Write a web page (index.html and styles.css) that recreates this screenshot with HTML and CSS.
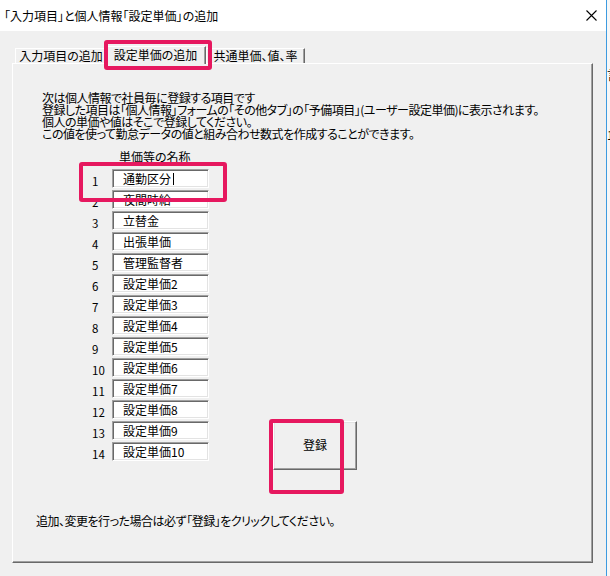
FILE: index.html
```html
<!DOCTYPE html>
<html lang="ja">
<head>
<meta charset="utf-8">
<title>設定単価の追加</title>
<link rel="stylesheet" href="styles.css">
</head>
<body>
<div class="screen">
  <div class="window">
    <div class="titlebar">
      <span class="title">「入力項目」と個人情報「設定単価」の追加</span>
      <svg class="close" width="11" height="11" viewBox="0 0 11 11"><path d="M0.5 0.5 L10.5 10.5 M10.5 0.5 L0.5 10.5" stroke="#000" stroke-width="1.1" fill="none"/></svg>
    </div>
    <div class="body">
      <div class="tabs">
        <div class="tab tab1">入力項目の追加</div>
        <div class="tab tab2 active">設定単価の追加</div>
        <div class="tab tab3">共通単価、値、率</div>
      </div>
      <div class="panel">
        <div class="intro">
          <div>次は個人情報で社員毎に登録する項目です</div>
          <div>登録した項目は「個人情報」フォームの「その他タブ」の「予備項目」(ユーザー設定単価)に表示されます。</div>
          <div>個人の単価や値はそこで登録してください。</div>
          <div>この値を使って勤怠データの値と組み合わせ数式を作成することができます。</div>
        </div>
        <div class="heading">単価等の名称</div>
        <div class="content">
          <div class="list">
            <div class="row"><span class="num">1</span><div class="field">通勤区分<span class="caret"></span></div></div>
            <div class="row"><span class="num">2</span><div class="field">夜間時給</div></div>
            <div class="row"><span class="num">3</span><div class="field">立替金</div></div>
            <div class="row"><span class="num">4</span><div class="field">出張単価</div></div>
            <div class="row"><span class="num">5</span><div class="field">管理監督者</div></div>
            <div class="row"><span class="num">6</span><div class="field">設定単価2</div></div>
            <div class="row"><span class="num">7</span><div class="field">設定単価3</div></div>
            <div class="row"><span class="num">8</span><div class="field">設定単価4</div></div>
            <div class="row"><span class="num">9</span><div class="field">設定単価5</div></div>
            <div class="row"><span class="num">10</span><div class="field">設定単価6</div></div>
            <div class="row"><span class="num">11</span><div class="field">設定単価7</div></div>
            <div class="row"><span class="num">12</span><div class="field">設定単価8</div></div>
            <div class="row"><span class="num">13</span><div class="field">設定単価9</div></div>
            <div class="row"><span class="num">14</span><div class="field">設定単価10</div></div>
          </div>
          <div class="button">登録</div>
        </div>
        <div class="note">追加、変更を行った場合は必ず「登録」をクリックしてください。</div>
      </div>
    </div>
  </div>
  <div class="behind">
    <span class="g1">言</span>
    <span class="g2">1</span>
  </div>
  <div class="mark mark-tab"></div>
  <div class="mark mark-row"></div>
  <div class="mark mark-btn"></div>
</div>
</body>
</html>
```
FILE: styles.css
```css
* { box-sizing: border-box; }
html, body { margin: 0; padding: 0; }
body {
  font-family: "Noto Sans CJK JP", "Noto Sans", sans-serif;
  font-size: 12px;
  font-feature-settings: "palt";
  color: #000;
  background: #fff;
}
.screen {
  position: relative;
  width: 610px;
  height: 576px;
  display: flex;
  overflow: hidden;
}
.window {
  width: 607px;
  height: 576px;
  border-right: 1px solid #3d9be0;
  display: flex;
  flex-direction: column;
  background: #f0f0f0;
}
.titlebar {
  height: 31px;
  background: #fff;
  display: flex;
  align-items: center;
  justify-content: space-between;
  padding: 0 9px 0 4px;
}
.title { line-height: 14px; }
.close { display: block; }
.body {
  flex: 1;
  padding: 0 13px 0 12px;
}
.tabs {
  height: 32px;
  display: flex;
  align-items: flex-end;
  padding-left: 3px;
  position: relative;
  z-index: 2;
}
.tab {
  height: 15px;
  line-height: 14px;
  text-align: center;
  background: #f0f0f0;
  border-top: 1px solid #fff;
  border-left: 1px solid #fff;
  border-right: 1px solid #696969;
  box-shadow: inset -1px 0 #a0a0a0;
  white-space: nowrap;
}
.tab1 { width: 92px; }
.tab2 {
  width: 101px;
  margin-left: -2px;
  height: 18px;
  margin-bottom: -1px;
  padding-top: 1px;
  position: relative;
  z-index: 3;
}
.tab3 { width: 99px; margin-left: 0; }
.panel {
  height: 500px;
  border: 1px solid;
  border-color: #fff #696969 #696969 #fff;
  box-shadow: inset -1px -1px #a0a0a0;
  padding-top: 28px;
}
.intro {
  margin-left: 29px;
  line-height: 12px;
  letter-spacing: -0.5px;
  white-space: nowrap;
}
.heading {
  margin: 11px 0 0 106px;
  line-height: 12px;
}
.content {
  display: flex;
  align-items: flex-start;
  margin-top: 6px;
}
.list {
  margin-left: 79px;
  display: flex;
  flex-direction: column;
  gap: 2px;
}
.row {
  display: flex;
  align-items: center;
  height: 19px;
}
.num {
  width: 20px;
  padding-top: 4px;
  font-size: 11.5px;
  line-height: 12px;
}
.field {
  width: 97px;
  height: 19px;
  background: #fff;
  border: 1px solid;
  border-color: #a0a0a0 #fff #fff #a0a0a0;
  box-shadow: inset 1px 1px #696969, inset -1px -1px #e3e3e3;
  padding-left: 10px;
  line-height: 17px;
  white-space: nowrap;
  display: flex;
  align-items: center;
}
.caret {
  display: inline-block;
  width: 1px;
  height: 12px;
  background: #000;
  margin-left: 2px;
}
.button {
  margin: 252px 0 0 64px;
  width: 84px;
  height: 49px;
  border: 1px solid;
  border-color: #fff #696969 #696969 #fff;
  box-shadow: inset -1px -1px #a0a0a0, inset 1px 1px #e3e3e3;
  display: flex;
  align-items: center;
  justify-content: center;
  padding-bottom: 2px;
}
.note {
  margin: 45px 0 0 23px;
  line-height: 12px;
  letter-spacing: -0.5px;
}
.behind {
  flex: 1;
  position: relative;
  background: #f7f7f7;
  overflow: hidden;
}
.behind span {
  position: absolute;
  left: 0;
  font-size: 12px;
  line-height: 12px;
}
.g1 { top: 69px; }
.g2 { top: 129px; }
.mark {
  position: absolute;
  border: 4px solid #e6185f;
  border-radius: 3px;
  z-index: 10;
}
.mark-tab { left: 104px; top: 40px; width: 108px; height: 30px; }
.mark-row { left: 79px; top: 162px; width: 148px; height: 40px; }
.mark-btn { left: 269px; top: 419px; width: 75px; height: 75px; }
```
